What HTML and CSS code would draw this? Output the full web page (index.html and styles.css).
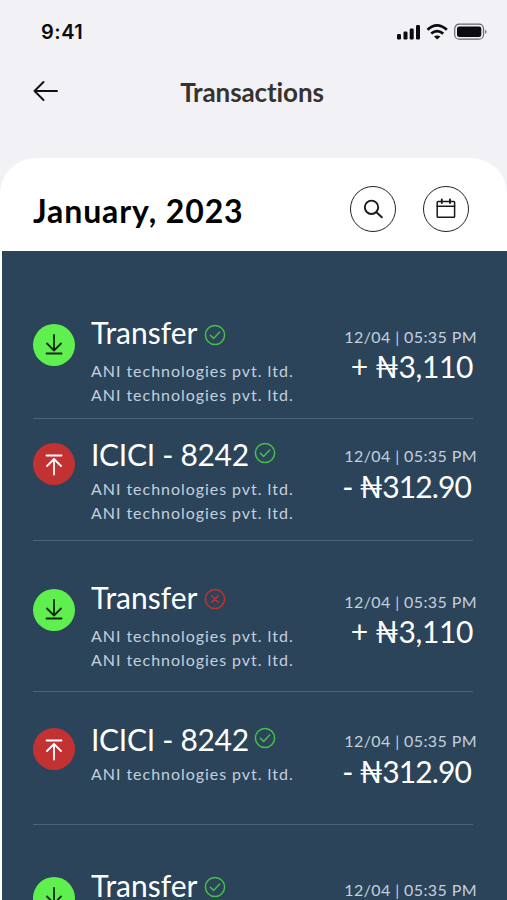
FILE: index.html
```
<!DOCTYPE html>
<html lang="en">

<head>
    <meta charset="UTF-8">
    <title>Transactions</title>
    <meta name="viewport" content="width=device-width, initial-scale=1">
    <link rel="stylesheet" href="styles.css">
</head>

<body>
    <!-- shared icons -->
    <svg class="sprite" width="0" height="0">
        <symbol id="download" viewBox="0 0 42 42">
            <path d="M21 11v15.500M14 19.500l7 7 7-7M13.500 29.500h15" />
        </symbol>
        <symbol id="upload" viewBox="0 0 42 42">
            <path d="M21 31.500V16M14 23l7-7 7 7M13.500 12.500h15" />
        </symbol>
        <symbol id="check" viewBox="0 0 22 22">
            <circle cx="11" cy="11" r="9.600" />
            <path d="M6.300 11.300l3.300 3.100 6.100-6.400" />
        </symbol>
        <symbol id="cross" viewBox="0 0 22 22">
            <circle cx="11" cy="11" r="9.600" />
            <path d="M7.700 7.700l6.600 6.600M14.300 7.700l-6.600 6.600" />
        </symbol>
    </svg>

    <div class="status">
        <span class="time">9:41</span>
        <svg class="status-icons" width="92" height="18" viewBox="0 0 92 18">
            <rect x="1" y="11" width="4" height="5.500" rx="1.200" />
            <rect x="7.500" y="8.500" width="4" height="8" rx="1.200" />
            <rect x="13.700" y="5.500" width="4" height="11" rx="1.200" />
            <rect x="20" y="2" width="4" height="14.500" rx="1.200" />
            <g class="wifi">
                <path d="M31.500 6.800q9.300-8.800 19.400 0" />
                <path d="M35.200 10.600q5.800-5 12 0" />
            </g>
            <path d="M41.200 16.500l-3.300-2.900q3.300-2.300 6.600 0z" />
            <rect class="battery" x="58.700" y="1.200" width="28.800" height="15" rx="4.500" />
            <rect x="61" y="3.500" width="24.300" height="10.400" rx="2.200" />
            <path class="cap" d="M89.200 6.500q2.800 2.300 0 4.600z" />
        </svg>
    </div>

    <header>
        <svg class="back" width="26" height="22" viewBox="0 0 26 22">
            <path d="M24 11H1.500M10.500 2L1.500 11l9 9" />
        </svg>
        <h1>Transactions</h1>
    </header>

    <main>
        <div class="month">
            <h2>January, 2023</h2>
            <button class="round">
                <svg width="22" height="22" viewBox="0 0 22 22">
                    <circle cx="9.500" cy="9.300" r="6.700" stroke-width="1.900" />
                    <path d="M14.500 14.200l5.300 5.100" stroke-width="1.900" />
                </svg>
            </button>
            <button class="round">
                <svg width="22" height="22" viewBox="0 0 22 22">
                    <rect x="2.200" y="3.500" width="17.400" height="15.700" rx=".8" />
                    <path d="M2.200 8.200h17.400" />
                    <path d="M6.800 1.500v3.500M15 1.500v3.500" stroke-width="1.900" />
                </svg>
            </button>
        </div>

        <section class="list">
            <article class="first">
                <svg class="type in"><use href="#download" /></svg>
                <div class="info">
                    <h3>Transfer<svg class="state ok"><use href="#check" /></svg></h3>
                    <p>ANI technologies pvt. ltd.</p>
                    <p>ANI technologies pvt. ltd.</p>
                </div>
                <div class="sum">
                    <time>12/04 | 05:35 PM</time>
                    <strong>+ ₦3,110</strong>
                </div>
            </article>
            <article class="second bank">
                <svg class="type out"><use href="#upload" /></svg>
                <div class="info">
                    <h3>ICICI - 8242<svg class="state ok"><use href="#check" /></svg></h3>
                    <p>ANI technologies pvt. ltd.</p>
                    <p>ANI technologies pvt. ltd.</p>
                </div>
                <div class="sum">
                    <time>12/04 | 05:35 PM</time>
                    <strong>- ₦312.90</strong>
                </div>
            </article>
            <article class="third">
                <svg class="type in"><use href="#download" /></svg>
                <div class="info">
                    <h3>Transfer<svg class="state failed"><use href="#cross" /></svg></h3>
                    <p>ANI technologies pvt. ltd.</p>
                    <p>ANI technologies pvt. ltd.</p>
                </div>
                <div class="sum">
                    <time>12/04 | 05:35 PM</time>
                    <strong>+ ₦3,110</strong>
                </div>
            </article>
            <article class="fourth bank">
                <svg class="type out"><use href="#upload" /></svg>
                <div class="info">
                    <h3>ICICI - 8242<svg class="state ok"><use href="#check" /></svg></h3>
                    <p>ANI technologies pvt. ltd.</p>
                </div>
                <div class="sum">
                    <time>12/04 | 05:35 PM</time>
                    <strong>- ₦312.90</strong>
                </div>
            </article>
            <article class="fifth">
                <svg class="type in"><use href="#download" /></svg>
                <div class="info">
                    <h3>Transfer<svg class="state ok"><use href="#check" /></svg></h3>
                </div>
                <div class="sum">
                    <time>12/04 | 05:35 PM</time>
                </div>
            </article>
        </section>
    </main>
</body>

</html>
```
FILE: styles.css
```
* {
    box-sizing: border-box;
    padding: 0;
    margin: 0;
}

body {
    height: 900px;
    display: flex;
    flex-direction: column;
    overflow: hidden;
    background: #f2f1f6;
    font-family: Lato, "Liberation Sans", sans-serif;
    font-variant-ligatures: none;
}

svg {
    fill: none;
    stroke: currentColor;
    stroke-width: 1.5;
    stroke-linecap: round;
    stroke-linejoin: round;
    flex: none;
}

.sprite {
    display: block;
}

.status {
    height: 64px;
    padding: 0 19px 0 41px;
    display: flex;
    align-items: center;
    justify-content: space-between;
    color: #0c0c0e;
}

.time {
    font-family: Inter, sans-serif;
    font-size: 20px;
    font-weight: 600;
    letter-spacing: 0.5px;
}

.status-icons {
    fill: #0c0c0e;
    stroke: none;
}

.wifi {
    fill: none;
    stroke: #0c0c0e;
    stroke-width: 2.7;
    stroke-linecap: butt;
}

.battery {
    fill: none;
    stroke: #66666a;
    stroke-width: 1.2;
}

.cap {
    fill: #66666a;
}

header {
    height: 94px;
    padding: 0 36px 40px 33px;
    display: grid;
    grid-template-columns: 26px 1fr 26px;
    align-items: center;
}

.back {
    color: #111;
    stroke-width: 2;
}

h1 {
    font-size: 26px;
    font-weight: 700;
    line-height: 32px;
    letter-spacing: -0.1px;
    padding-top: 2px;
    text-align: center;
    color: #35332f;
}

main {
    flex: 1;
    background: #fff;
    border-radius: 36px 36px 0 0;
    padding-left: 2px;
}

.month {
    height: 93px;
    padding: 9px 38px 0 31px;
    display: flex;
    align-items: center;
    gap: 27px;
}

h2 {
    flex: 1;
    font-size: 32px;
    font-weight: 700;
    line-height: 40px;
    letter-spacing: 0.9px;
    padding-top: 3px;
    white-space: nowrap;
}

.round {
    width: 46px;
    height: 46px;
    border: 1.500px solid #222;
    border-radius: 50%;
    background: none;
    color: #1a1a1a;
    display: flex;
    align-items: center;
    justify-content: center;
}

.list {
    height: 649px;
    padding: 0 34px 0 31px;
    background: #2b4459;
    color: #fff;
}

article {
    display: flex;
    align-items: flex-start;
    border-bottom: 1px solid #4b647a;
}

.first {
    height: 168px;
    padding-top: 63px;
}

.second {
    height: 122px;
    padding-top: 17px;
}

.third {
    height: 151px;
    padding-top: 38px;
}

.fourth {
    height: 133px;
    padding-top: 29px;
}

.fifth {
    height: 75px;
    padding-top: 42px;
    border-bottom: none;
}

.type {
    width: 42px;
    height: 42px;
    margin: 10px 16px 0 0;
    border-radius: 50%;
    stroke-width: 1.8;
}

.in {
    background: #5ff050;
    color: #10280f;
}

.out {
    background: #c23232;
    color: #fff;
}

.info {
    flex: 1;
}

h3 {
    height: 36px;
    display: flex;
    align-items: center;
    gap: 6px;
    font-size: 30px;
    font-weight: 400;
    line-height: 36px;
    white-space: nowrap;
    margin-bottom: 9px;
}

.state {
    width: 22px;
    height: 22px;
    margin-top: 3px;
}

.first .state {
    margin-top: 5px;
}

.ok {
    color: #45c04b;
}

.failed {
    color: #c23232;
}

p {
    font-size: 16px;
    line-height: 24px;
    letter-spacing: 0.96px;
    color: #c3d0de;
    white-space: nowrap;
}

.sum {
    display: flex;
    flex-direction: column;
    align-items: flex-end;
    padding-top: 13px;
    white-space: nowrap;
}

time {
    font-size: 16px;
    line-height: 20px;
    letter-spacing: 0.4px;
    color: #c3d0de;
    margin-right: -4px;
}

strong {
    font-size: 30px;
    font-weight: 400;
    line-height: 36px;
    letter-spacing: -0.4px;
    margin-top: 1px;
}

.bank .type {
    margin-top: 7px;
}

.bank h3 {
    gap: 5px;
    letter-spacing: -0.3px;
    margin-bottom: 5px;
}

.bank .state {
    margin-top: -2px;
}

.bank .sum {
    padding-top: 10px;
}

.bank strong {
    letter-spacing: -0.9px;
    margin: 2px 2px 0 0;
}
```
